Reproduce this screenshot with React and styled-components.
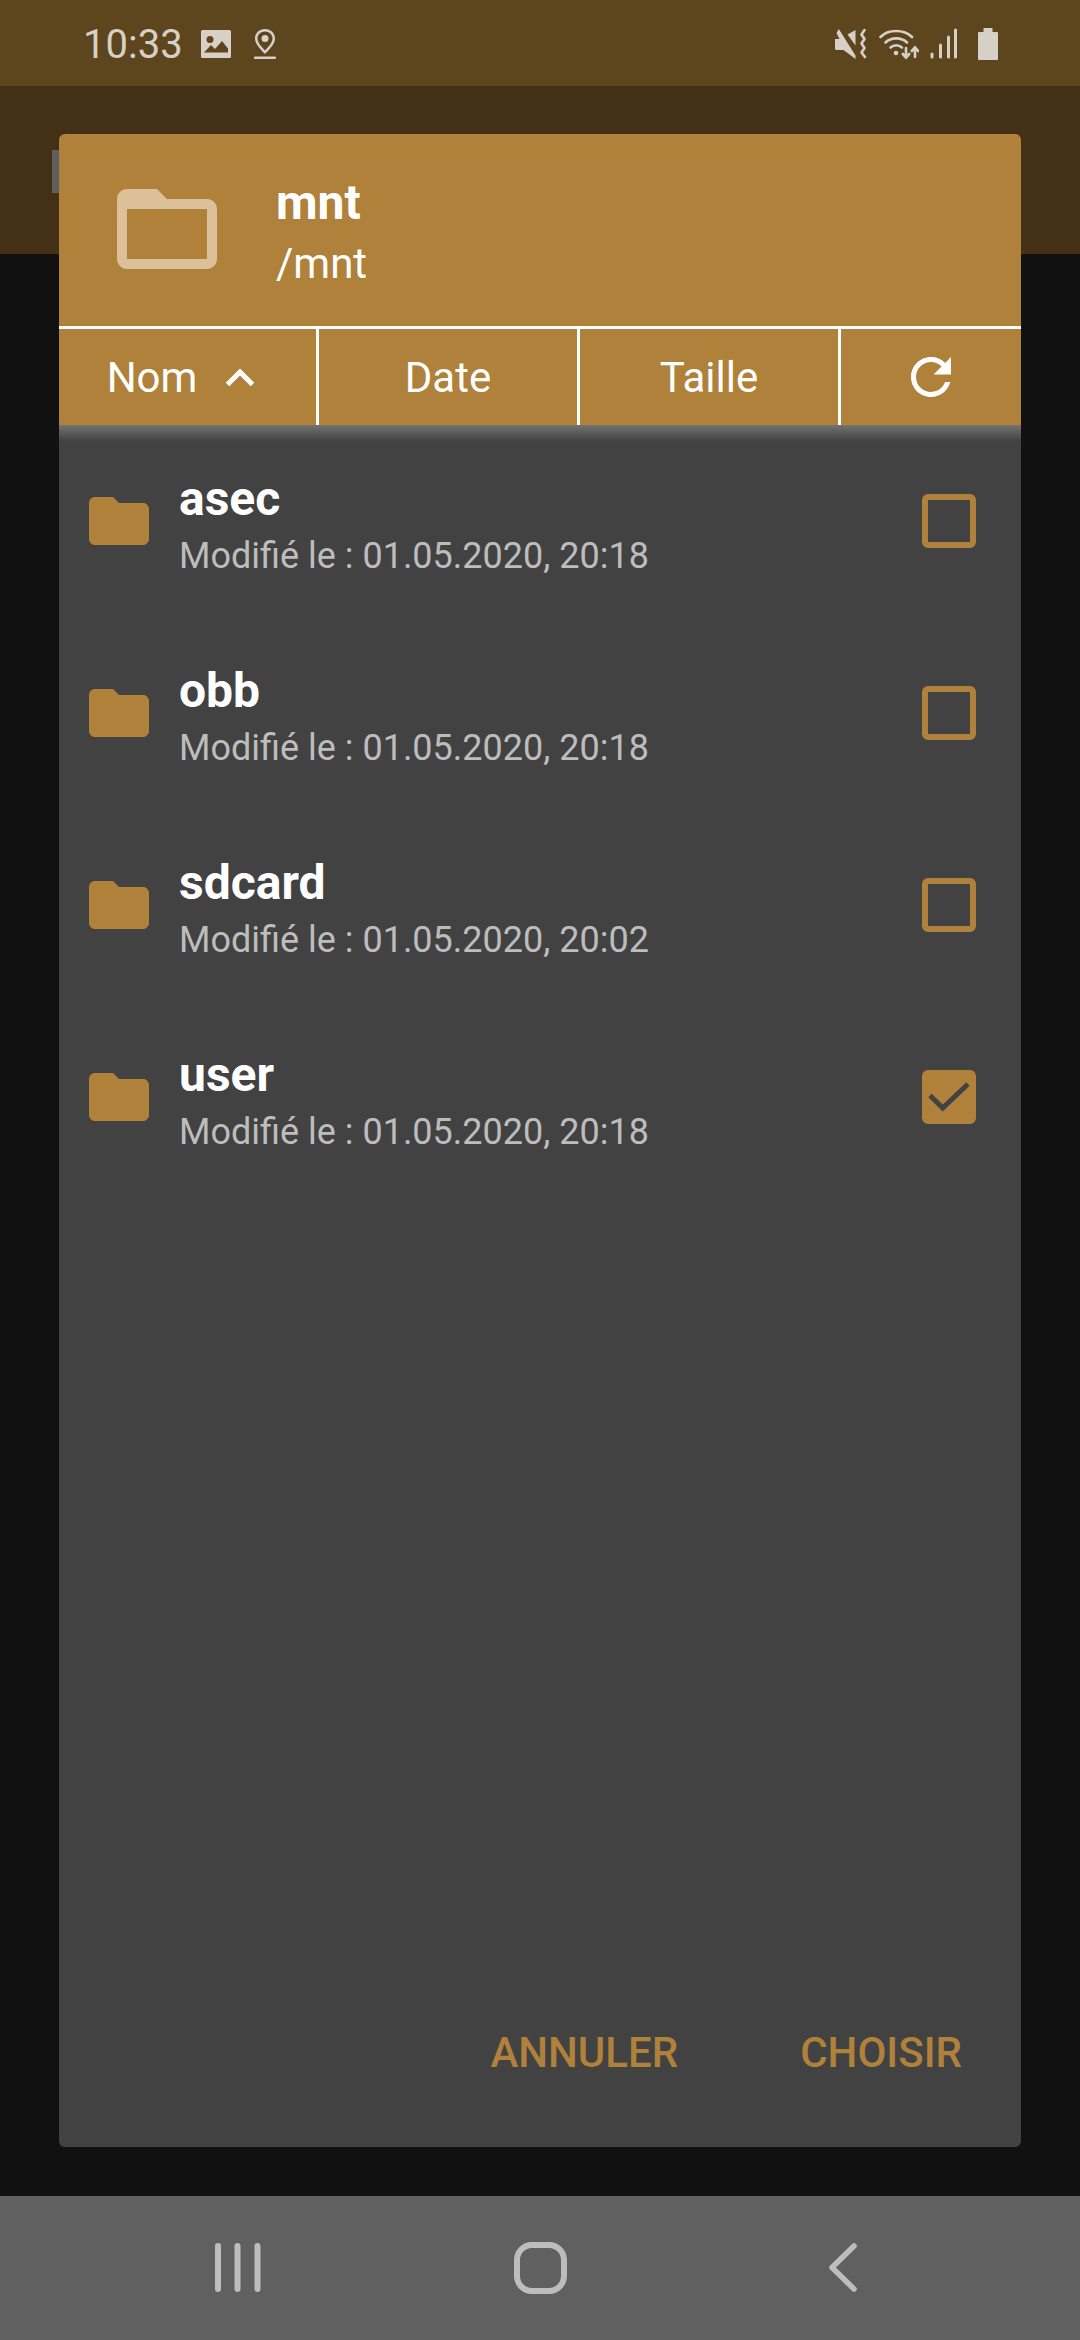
import React from 'react';
import styled, { createGlobalStyle } from 'styled-components';

const accent = '#af813a';
const body = '#424242';

const Global = createGlobalStyle`
  html, body { margin: 0; padding: 0; background: #111; }
  * { box-sizing: border-box; }
`;

const Screen = styled.div`
  position: relative;
  width: 1080px;
  height: 2340px;
  display: flex;
  flex-direction: column;
  overflow: hidden;
  background: #111111;
  font-family: Roboto, "Liberation Sans", sans-serif;
`;

const StatusBar = styled.div`
  height: 86px;
  flex: none;
  background: #5d461e;
  color: #d6d0c7;
  display: flex;
  align-items: center;
  justify-content: space-between;
  padding: 2px 82px 0 83px;
`;
const StatusLeft = styled.div`
  display: flex;
  align-items: center;
`;
const Clock = styled.span`
  font-size: 40px;
  line-height: 46px;
  width: 118px;
  margin-top: 2px;
`;
const StatusIcon = styled.svg`
  display: block;
  flex: none;
  margin-left: ${p => p.$gap || 0}px;
  fill: currentColor;
`;
const StatusRight = styled.div`
  display: flex;
  align-items: center;
`;

const AppBar = styled.div`
  height: 168px;
  flex: none;
  background: #443014;
  padding: 64px 0 0 52px;
`;
const AppBarStub = styled.div`
  width: 30px;
  height: 43px;
  background: #5f5f5f;
`;
const Backdrop = styled.div`
  flex: 1;
  background: #111111;
`;

const NavBar = styled.div`
  height: 144px;
  flex: none;
  background: #606060;
  color: #bdbdbd;
  display: flex;
  align-items: center;
  padding: 0 0 0 214px;
`;
const NavIcon = styled.svg`
  display: block;
  flex: none;
  margin-left: ${p => p.$gap || 0}px;
`;

const Dialog = styled.div`
  position: absolute;
  left: 59px;
  top: 134px;
  width: 962px;
  height: 2013px;
  background: ${body};
  border-radius: 6px;
  overflow: hidden;
  display: flex;
  flex-direction: column;
`;
const DialogHead = styled.div`
  height: 195px;
  flex: none;
  background: ${accent};
  display: flex;
  align-items: center;
  padding: 0 0 0 48px;
  border-bottom: 3px solid #fff;
`;
const HeadIcon = styled.svg`
  width: 120px;
  height: 120px;
  fill: #dbc09a;
  flex: none;
  margin-top: -2px;
`;
const HeadText = styled.div`
  margin-left: 49px;
  color: #fff;
  margin-top: 6px;
`;
const HeadTitle = styled.div`
  font-size: 48px;
  font-weight: 700;
  line-height: 62px;
`;
const HeadPath = styled.div`
  font-size: 42px;
  line-height: 60px;
`;

const Tabs = styled.div`
  height: 96px;
  flex: none;
  display: flex;
  background: ${accent};
`;
const Tab = styled.div`
  width: ${p => p.$w}px;
  flex: none;
  display: flex;
  align-items: center;
  justify-content: center;
  color: #fff;
  font-size: 42px;
  border-right: ${p => (p.$last ? 'none' : '3px solid #fff')};
`;
const TabIcon = styled.svg`
  display: block;
  flex: none;
  margin-left: ${p => p.$gap || 0}px;
  margin-right: ${p => p.$trail || 0}px;
`;

const List = styled.div`
  flex: 1;
  position: relative;
  &::before {
    content: '';
    position: absolute;
    left: 0;
    right: 0;
    top: 0;
    height: 16px;
    background: linear-gradient(#737373, ${body});
  }
`;
const Row = styled.div`
  height: 192px;
  display: flex;
  align-items: center;
  padding: 0 45px 0 24px;
`;
const RowIcon = styled.svg`
  width: 72px;
  height: 72px;
  fill: ${accent};
  flex: none;
`;
const RowText = styled.div`
  flex: 1;
  margin-left: 24px;
  margin-top: 8px;
`;
const RowName = styled.div`
  color: #fff;
  font-size: 48px;
  font-weight: 700;
  line-height: 62px;
`;
const RowDate = styled.div`
  color: #bdbdbd;
  font-size: 36px;
  line-height: 52px;
`;
const Check = styled.div`
  width: 54px;
  height: 54px;
  flex: none;
  border-radius: 6px;
  border: 6px solid ${accent};
  background: ${p => (p.$on ? accent : 'transparent')};
  display: flex;
  align-items: center;
  justify-content: center;
`;
const CheckMark = styled.svg`
  flex: none;
  display: block;
`;

const Actions = styled.div`
  height: 192px;
  flex: none;
  display: flex;
  justify-content: flex-end;
  align-items: center;
  gap: 122px;
  padding: 0 59px 0 0;
  color: ${accent};
  font-size: 42px;
  font-weight: 500;
`;
const ActionButton = styled.span`
  display: block;
  margin-top: 2px;
`;

const FOLDER_OUTLINE = 'M20 6h-8l-2-2H4c-1.1 0-1.99.9-1.99 2L2 18c0 1.1.9 2 2 2h16c1.1 0 2-.9 2-2V8c0-1.1-.9-2-2-2zm0 12H4V8h16v10z';
const FOLDER_SOLID = 'M10 4H4c-1.1 0-1.99.9-1.99 2L2 18c0 1.1.9 2 2 2h16c1.1 0 2-.9 2-2V8c0-1.1-.9-2-2-2h-8l-2-2z';

const rows = [
  { name: 'asec', date: 'Modifié le : 01.05.2020, 20:18' },
  { name: 'obb', date: 'Modifié le : 01.05.2020, 20:18' },
  { name: 'sdcard', date: 'Modifié le : 01.05.2020, 20:02' },
  { name: 'user', date: 'Modifié le : 01.05.2020, 20:18', on: true },
];

export default function App() {
  return (
    <Screen>
      <Global />
      <StatusBar>
        <StatusLeft>
          <Clock>10:33</Clock>
          <StatusIcon $gap={0} width="30" height="28" viewBox="0 0 30 28">
            <path fillRule="evenodd" d="M1.5 0h27A1.5 1.5 0 0 1 30 1.5v25a1.5 1.5 0 0 1-1.5 1.5h-27A1.5 1.5 0 0 1 0 26.500v-25A1.500 1.500 0 0 1 1.500 0zM3 22.500h24v-4l-6-7.500-7 8-4-4zM9 6a3.500 3.500 0 1 0 0 7 3.500 3.500 0 0 0 0-7z" />
          </StatusIcon>
          <StatusIcon $gap={23} width="22" height="30" viewBox="0 0 22 30">
            <path fillRule="evenodd" d="M11 0C5 0 1 4.300 1 9.500c0 5 4.500 10 10 15.500 5.500-5.500 10-10.500 10-15.500C21 4.300 17 0 11 0zm0 2.500c4.300 0 7.500 3.100 7.500 7 0 3.600-3.300 7.600-7.500 12-4.200-4.400-7.500-8.400-7.500-12 0-3.900 3.200-7 7.500-7zM11 6a3.500 3.500 0 1 0 0 7 3.500 3.500 0 0 0 0-7z" />
            <rect x="0" y="27.500" width="22" height="2.500" rx="1" />
          </StatusIcon>
        </StatusLeft>
        <StatusRight>
          <StatusIcon width="32" height="32" viewBox="0 0 32 32">
            <path d="M0 11h4.500L1.500 5 3.800 1 20.500 27.500v3.500L8.500 22H1.500A1.500 1.500 0 0 1 0 20.500zM20.500 2v15.500L12.500 6.500z" />
            <path d="M29.500 2L26.500 6.500 29.500 11 26.500 15.500 29.500 20 26.500 24.500 30 29" fill="none" stroke="currentColor" strokeWidth="2.600" strokeLinecap="round" strokeLinejoin="round" />
          </StatusIcon>
          <StatusIcon $gap={12} width="40" height="32" viewBox="0 0 40 32">
            <g fill="none" stroke="currentColor" strokeWidth="2.600" strokeLinecap="round">
              <path d="M1.500 9C9 1 25 1 33 9" />
              <path d="M6.500 14.500c5.500-5.500 16-5.500 21.500 0" />
              <path d="M11.500 19.500c3.500-3 8-3 11.500 0" />
              <path d="M27 20v9M23.800 26l3.200 3.500 3.200-3.500" />
              <path d="M36 29v-9M32.800 23l3.200-3.500 3.200 3.500" />
            </g>
            <circle cx="17" cy="25" r="2.300" />
          </StatusIcon>
          <StatusIcon $gap={11} width="27" height="32" viewBox="0 0 27 32">
            <g fill="none" stroke="currentColor" strokeWidth="3" strokeLinecap="round">
              <path d="M2 26v3M10.500 17v12M18.500 9v20M25.500 2v27" />
            </g>
          </StatusIcon>
          <StatusIcon $gap={21} width="20" height="32" viewBox="0 0 20 32">
            <path d="M5.500 0h9v4H19a1 1 0 0 1 1 1v26a1 1 0 0 1-1 1H1a1 1 0 0 1-1-1V5a1 1 0 0 1 1-1h4.500z" />
          </StatusIcon>
        </StatusRight>
      </StatusBar>
      <AppBar>
        <AppBarStub />
      </AppBar>
      <Backdrop />
      <NavBar>
        <NavIcon width="48" height="52" viewBox="0 0 48 52" fill="none" stroke="currentColor" strokeWidth="6" strokeLinecap="round">
          <path d="M4 4v43M23.500 4v43M43.500 4v43" />
        </NavIcon>
        <NavIcon $gap={252} width="53" height="52" viewBox="0 0 53 52" fill="none" stroke="currentColor" strokeWidth="6">
          <rect x="3" y="3" width="47" height="46" rx="15" />
        </NavIcon>
        <NavIcon $gap={261} width="30" height="52" viewBox="0 0 30 52" fill="none" stroke="currentColor" strokeWidth="5.500" strokeLinecap="round" strokeLinejoin="round">
          <path d="M26 4L4 25.500 26 47" />
        </NavIcon>
      </NavBar>

      <Dialog>
        <DialogHead>
          <HeadIcon viewBox="0 0 24 24"><path d={FOLDER_OUTLINE} /></HeadIcon>
          <HeadText>
            <HeadTitle>mnt</HeadTitle>
            <HeadPath>/mnt</HeadPath>
          </HeadText>
        </DialogHead>
        <Tabs>
          <Tab $w={260}>
            Nom
            <TabIcon $gap={28} $trail={13} width="30" height="20" viewBox="0 0 30 20" fill="none" stroke="#fff" strokeWidth="5">
              <path d="M2.500 17.500L15 5l12.500 12.500" />
            </TabIcon>
          </Tab>
          <Tab $w={261}>Date</Tab>
          <Tab $w={261}>Taille</Tab>
          <Tab $w={180} $last>
            <TabIcon width="60" height="60" viewBox="0 0 24 24">
              <path fill="#fff" d="M17.650 6.350A7.958 7.958 0 0 0 12 4c-4.420 0-7.990 3.580-7.990 8s3.570 8 7.990 8c3.730 0 6.840-2.550 7.730-6h-2.080A5.990 5.990 0 0 1 12 18c-3.310 0-6-2.690-6-6s2.690-6 6-6c1.660 0 3.140.69 4.220 1.780L13 11h7V4l-2.350 2.350z" />
            </TabIcon>
          </Tab>
        </Tabs>
        <List>
          {rows.map(r => (
            <Row key={r.name}>
              <RowIcon viewBox="0 0 24 24"><path d={FOLDER_SOLID} /></RowIcon>
              <RowText>
                <RowName>{r.name}</RowName>
                <RowDate>{r.date}</RowDate>
              </RowText>
              <Check $on={r.on}>
                {r.on && (
                  <CheckMark width="42" height="30" viewBox="0 0 42 30" fill="none" stroke={body} strokeWidth="5">
                    <path d="M2 13.500L14.700 26 40 2" />
                  </CheckMark>
                )}
              </Check>
            </Row>
          ))}
        </List>
        <Actions>
          <ActionButton>ANNULER</ActionButton>
          <ActionButton>CHOISIR</ActionButton>
        </Actions>
      </Dialog>
    </Screen>
  );
}
